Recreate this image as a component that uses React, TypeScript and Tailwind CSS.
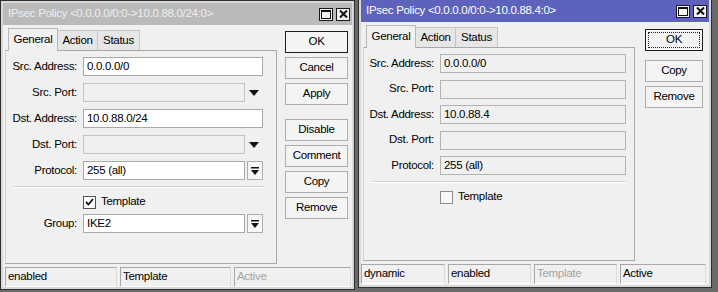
import type { ReactNode } from "react";

const font = "font-['Liberation_Sans',Arial,sans-serif]";

function TitleButtons({ active }: { active: boolean }) {
  const box = `w-[14px] h-[13px] border border-[#1a1a1a] flex items-center justify-center ${
    active ? "bg-[#f4f4f4]" : "bg-[#f0f0f0]"
  }`;
  return (
    <div className="flex gap-[3px]">
      <div className={box}>
        <svg width="10" height="9" viewBox="0 0 10 9">
          <rect x="0.5" y="0.5" width="9" height="8" fill="none" stroke="#111" />
          <rect x="0" y="0" width="10" height="2" fill="#111" />
        </svg>
      </div>
      <div className={box}>
        <svg width="9" height="8" viewBox="0 0 9 8">
          <path d="M1 0.5 L8 7.5 M8 0.5 L1 7.5" stroke="#111" strokeWidth="2" />
        </svg>
      </div>
    </div>
  );
}

function Window({
  active,
  title,
  className,
  children,
}: {
  active: boolean;
  title: string;
  className: string;
  children: ReactNode;
}) {
  return (
    <div className={`shrink-0 flex flex-col border border-[#2e2e2e] bg-[#d8d8d8] p-[2px] ${className}`}>
      <div
        className={`h-[22px] shrink-0 flex items-center justify-between pl-[5px] pr-[2px] text-[11.5px] ${
          active ? "bg-[#5d63bd] text-white" : "bg-[#bababa] text-[#eeeeee]"
        }`}
      >
        <span className="whitespace-nowrap">{title}</span>
        <TitleButtons active={active} />
      </div>
      <div className="flex-1 bg-[#f0f0f0] flex flex-col">{children}</div>
    </div>
  );
}

function Tabs() {
  return (
    <div className="h-[25px] flex items-end pl-[3px] shrink-0">
      <div className="w-[50px] h-[23px] bg-[#f0f0f0] border-t border-l border-r border-[#b8b8b8] flex items-center justify-center -mb-px relative z-10">
        General
      </div>
      <div className="w-[40px] h-[20px] bg-[#e6e6e6] border-t border-r border-[#c6c6c6] flex items-center justify-center">
        Action
      </div>
      <div className="w-[42px] h-[20px] bg-[#e6e6e6] border-t border-r border-[#c6c6c6] flex items-center justify-center">
        Status
      </div>
    </div>
  );
}

function Label({ text, w }: { text: string; w: string }) {
  return <div className={`${w} text-right shrink-0 whitespace-nowrap`}>{text}</div>;
}

function DropArrow() {
  return (
    <div className="w-[18px] flex justify-center">
      <svg width="10" height="6" viewBox="0 0 10 6">
        <polygon points="0,0 10,0 5,6" fill="#111" />
      </svg>
    </div>
  );
}

function ListButton() {
  return (
    <div className="ml-[2px] w-[16px] h-[19px] border border-[#adadad] bg-[#f7f7f7] flex items-center justify-center">
      <svg width="8" height="8" viewBox="0 0 8 8">
        <rect x="0" y="0" width="8" height="1.5" fill="#111" />
        <polygon points="0,3 8,3 4,8" fill="#111" />
      </svg>
    </div>
  );
}

function Btn({ text, w, def, focus }: { text: string; w: string; def?: boolean; focus?: boolean }) {
  return (
    <div
      className={`${w} h-[22px] flex items-center justify-center bg-[#f4f4f4] border ${
        def ? "border-[#1e1e1e]" : "border-[#acacac]"
      }`}
    >
      {focus ? (
        <div className="w-[calc(100%-4px)] h-[16px] border border-dotted border-[#222] flex items-center justify-center">
          {text}
        </div>
      ) : (
        text
      )}
    </div>
  );
}

function StatusCell({ text, w, dim }: { text: string; w: string; dim?: boolean }) {
  return (
    <div
      className={`${w} shrink-0 h-[20px] flex items-center pl-[2px] border-t border-l border-[#a8a8a8] border-r border-r-[#dcdcdc] border-b border-b-white ${
        dim ? "text-[#a4a4a4]" : "text-black"
      }`}
    >
      {text}
    </div>
  );
}

function Separator({ w }: { w: string }) {
  return <div className={`${w} ml-[8px] border-t border-[#d2d2d2] border-b border-b-white`} />;
}

function LeftWindow() {
  const lw = "w-[71px]";
  return (
    <Window active={false} title="IPsec Policy <0.0.0.0/0:0->10.0.88.0/24:0>" className="w-[355px] h-[290px]">
      <div className="flex pl-[2px]">
        <div className="w-[272px] flex flex-col">
          <Tabs />
          <div className="h-[214px] border border-[#a8a8a8] border-l-[#d0d0d0] pt-[6px] flex flex-col">
            <div className="flex flex-col gap-[7px]">
              <div className="flex items-center h-[19px]">
                <Label text="Src. Address:" w={lw} />
                <div className="ml-[6px] w-[180px] h-[19px] bg-white border border-[#a9a9a9] pl-[3px] flex items-center">0.0.0.0/0</div>
              </div>
              <div className="flex items-center h-[19px]">
                <Label text="Src. Port:" w={lw} />
                <div className="ml-[6px] w-[162px] h-[19px] bg-[#f0f0f0] border border-[#c4c4c4]" />
                <DropArrow />
              </div>
              <div className="flex items-center h-[19px]">
                <Label text="Dst. Address:" w={lw} />
                <div className="ml-[6px] w-[180px] h-[19px] bg-white border border-[#a9a9a9] pl-[3px] flex items-center">10.0.88.0/24</div>
              </div>
              <div className="flex items-center h-[19px]">
                <Label text="Dst. Port:" w={lw} />
                <div className="ml-[6px] w-[162px] h-[19px] bg-[#f0f0f0] border border-[#c4c4c4]" />
                <DropArrow />
              </div>
              <div className="flex items-center h-[19px]">
                <Label text="Protocol:" w={lw} />
                <div className="ml-[6px] w-[162px] h-[19px] bg-white border border-[#a9a9a9] pl-[3px] flex items-center">255 (all)</div>
                <ListButton />
              </div>
            </div>
            <div className="mt-[6px]">
              <Separator w="w-[250px]" />
            </div>
            <div className="mt-[7px] flex items-center h-[14px] pl-[77px]">
              <div className="w-[13px] h-[13px] bg-white border border-[#555] flex items-center justify-center">
                <svg width="9" height="8" viewBox="0 0 9 8">
                  <path d="M1 4 L3.5 6.5 L8 1" fill="none" stroke="#111" strokeWidth="1.8" />
                </svg>
              </div>
              <span className="ml-[5px]">Template</span>
            </div>
            <div className="mt-[5px] flex items-center h-[19px]">
              <Label text="Group:" w={lw} />
              <div className="ml-[6px] w-[162px] h-[19px] bg-white border border-[#a9a9a9] pl-[3px] flex items-center">IKE2</div>
              <ListButton />
            </div>
          </div>
        </div>
        <div className="ml-[8px] mt-[6px] flex flex-col gap-[4px]">
          <Btn text="OK" w="w-[63px]" def />
          <Btn text="Cancel" w="w-[63px]" />
          <Btn text="Apply" w="w-[63px]" />
          <div className="h-[6px]" />
          <Btn text="Disable" w="w-[63px]" />
          <Btn text="Comment" w="w-[63px]" />
          <Btn text="Copy" w="w-[63px]" />
          <Btn text="Remove" w="w-[63px]" />
        </div>
      </div>
      <div className="mt-[3px] flex gap-[3px] pl-[2px]">
        <StatusCell text="enabled" w="w-[112px]" />
        <StatusCell text="Template" w="w-[111px]" />
        <StatusCell text="Active" w="w-[117px]" dim />
      </div>
    </Window>
  );
}

function RightWindow() {
  const lw = "w-[70px]";
  const ro = "ml-[6px] w-[186px] h-[19px] bg-[#f0f0f0] border border-[#b4b4b4] pl-[3px] flex items-center";
  return (
    <Window active title="IPsec Policy <0.0.0.0/0:0->10.0.88.4:0>" className="w-[354px] h-[291px] -mt-[3px] ml-[3px]">
      <div className="flex pl-[2px]">
        <div className="w-[272px] flex flex-col">
          <Tabs />
          <div className="h-[214px] border border-[#a8a8a8] border-l-[#d0d0d0] pt-[6px] flex flex-col">
            <div className="flex flex-col gap-[6.5px]">
              <div className="flex items-center h-[19px]">
                <Label text="Src. Address:" w={lw} />
                <div className={ro}>0.0.0.0/0</div>
              </div>
              <div className="flex items-center h-[19px]">
                <Label text="Src. Port:" w={lw} />
                <div className={ro} />
              </div>
              <div className="flex items-center h-[19px]">
                <Label text="Dst. Address:" w={lw} />
                <div className={ro}>10.0.88.4</div>
              </div>
              <div className="flex items-center h-[19px]">
                <Label text="Dst. Port:" w={lw} />
                <div className={ro} />
              </div>
              <div className="flex items-center h-[19px]">
                <Label text="Protocol:" w={lw} />
                <div className={ro}>255 (all)</div>
              </div>
            </div>
            <div className="mt-[6px]">
              <Separator w="w-[254px]" />
            </div>
            <div className="mt-[7px] flex items-center h-[14px] pl-[76px]">
              <div className="w-[13px] h-[13px] bg-[#f8f8f8] border border-[#8c8c8c]" />
              <span className="ml-[5px]">Template</span>
            </div>
          </div>
        </div>
        <div className="ml-[10px] mt-[7px] flex flex-col">
          <Btn text="OK" w="w-[58px]" def focus />
          <div className="mt-[9px] flex flex-col gap-[4px]">
            <Btn text="Copy" w="w-[58px]" />
            <Btn text="Remove" w="w-[58px]" />
          </div>
        </div>
      </div>
      <div className="mt-[3px] flex gap-[3px]">
        <StatusCell text="dynamic" w="w-[84px]" />
        <StatusCell text="enabled" w="w-[83px]" />
        <StatusCell text="Template" w="w-[83px]" dim />
        <StatusCell text="Active" w="w-[86px]" />
      </div>
    </Window>
  );
}

export default function App() {
  return (
    <div
      className={`w-[718px] h-[292px] overflow-hidden bg-[#6a6a6a] flex items-start text-[11.5px] tracking-[-0.3px] leading-none text-black ${font}`}
    >
      <LeftWindow />
      <RightWindow />
    </div>
  );
}
